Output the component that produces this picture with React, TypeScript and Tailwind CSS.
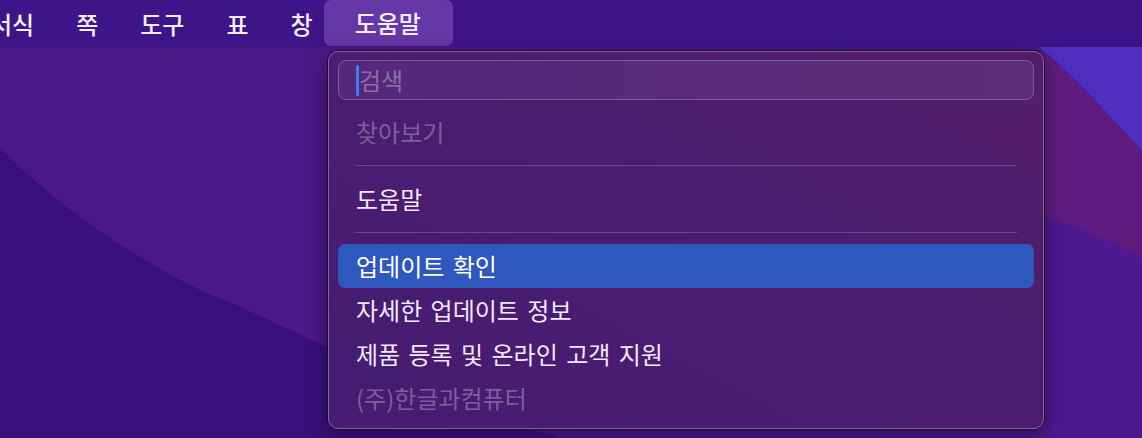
import React from 'react'

const FONT = { fontFamily: '"Noto Sans CJK KR", "Noto Sans", sans-serif' }

const MENUS = ['서식', '쪽', '도구', '표', '창']

function Wallpaper() {
  return (
    <svg className="absolute inset-0 h-full w-full" viewBox="0 0 1142 438" preserveAspectRatio="none">
      <rect width="1142" height="438" fill="#38107a" />
      <path d="M0 40 L1142 40 L1142 438 L560 438 C 420 400, 300 330, 200 290 C 120 250, 50 200, 0 147 Z" fill="#4b1887" />
      <path d="M1040 40 L1142 40 L1142 438 L1040 438 Z" fill="#4d1890" />
      <path d="M1040 215 C 1080 228, 1110 240, 1142 258 L1142 150 C 1110 120, 1080 80, 1040 50 Z" fill="#5f1c80" />
      <path d="M1040 48 C 1080 80, 1110 118, 1142 150 L1142 40 L1040 40 Z" fill="#4f2fbf" />
    </svg>
  )
}

function Row({ label, disabled, active }: { label: string; disabled?: boolean; active?: boolean }) {
  return (
    <div
      className={
        'flex h-[44px] items-center rounded-[7px] px-[18px] text-[24px] [word-spacing:3px] ' +
        (active ? 'bg-[#2f58be] text-white' : disabled ? 'text-[#7d5f9c]' : 'text-[#f1e9f6]')
      }
    >
      {label}
    </div>
  )
}

function Sep() {
  return (
    <div className="flex h-[23px] items-center px-[17px]">
      <div className="h-px w-full bg-[#6c4592]" />
    </div>
  )
}

export default function App() {
  return (
    <div className="relative h-[438px] w-[1142px] overflow-hidden" style={FONT}>
      <Wallpaper />

      {/* menu bar */}
      <div className="relative flex h-[47px] items-center bg-[#3e1489] text-[24px] font-medium text-[#f4eefa]">
        <div className="-ml-[31px] flex items-center">
          {MENUS.map(m => (
            <span key={m} className="px-[21px] leading-[47px]">{m}</span>
          ))}
          <span className="-ml-[10px] mb-px rounded-[7px] bg-[#6637a7] pl-[31px] pr-[32px] leading-[46px]">도움말</span>
        </div>
      </div>

      {/* dropdown */}
      <div className="absolute left-[327px] top-[50px] w-[718px] rounded-[11px] border border-[#1c0a2c] shadow-[0_6px_20px_rgba(0,0,0,0.35)]">
        <div className="rounded-[10px] border border-[#84649f] bg-gradient-to-tr from-[#451c72] via-[#4a1d70] to-[#541d69] px-[9px] pb-[8px] pt-[8px]">
          <div className="flex h-[40px] items-center rounded-[8px] border border-[#7c5c9b] bg-gradient-to-r from-[#55287c] to-[#5e2b75] pl-[17px]">
            <span className="h-[31px] w-[3px] rounded-sm bg-[#3d7df4]" />
            <span className="text-[24px] text-[#8a70a6]">검색</span>
          </div>
          <div className="mt-[10px]">
            <Row label="찾아보기" disabled />
            <Sep />
            <Row label="도움말" />
            <Sep />
            <Row label="업데이트 확인" active />
            <Row label="자세한 업데이트 정보" />
            <Row label="제품 등록 및 온라인 고객 지원" />
            <Row label="(주)한글과컴퓨터" disabled />
          </div>
        </div>
      </div>
    </div>
  )
}
